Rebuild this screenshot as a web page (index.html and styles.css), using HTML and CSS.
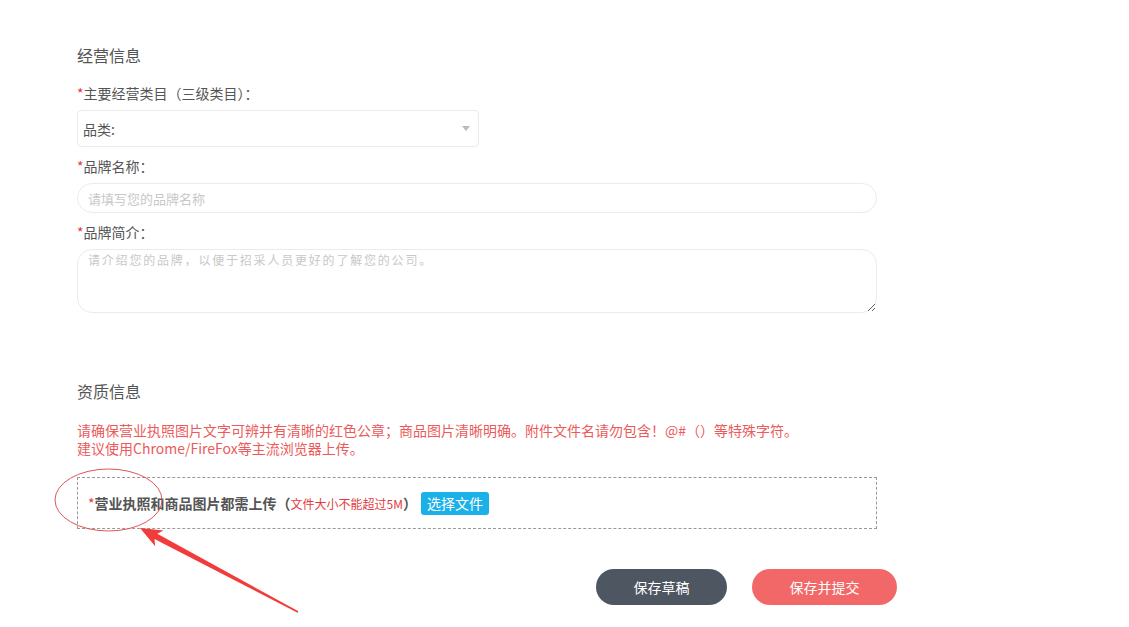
FILE: index.html
```html
<!DOCTYPE html>
<html lang="zh-CN">
<head>
    <meta charset="UTF-8">
    <meta name="viewport" content="width=device-width, initial-scale=1.0">
    <title>经营信息</title>
    <link rel="stylesheet" href="styles.css">
</head>
<body>
<div class="page">
    <h3 class="section-title">经营信息</h3>
    <div class="form-group">
        <label><span class="star">*</span>主要经营类目（三级类目）：</label>
        <div class="select-box">
            <span>品类:</span>
            <i class="caret"></i>
        </div>
    </div>
    <div class="form-group">
        <label for="brandName"><span class="star">*</span>品牌名称：</label>
        <input type="text" id="brandName" class="pill-input" placeholder="请填写您的品牌名称">
    </div>
    <div class="form-group">
        <label for="brandIntro"><span class="star">*</span>品牌简介：</label>
        <textarea id="brandIntro" class="pill-textarea" placeholder="请介绍您的品牌，以便于招采人员更好的了解您的公司。"></textarea>
    </div>

    <h3 class="section-title second">资质信息</h3>
    <p class="notice">
        请确保营业执照图片文字可辨并有清晰的红色公章；商品图片清晰明确。附件文件名请勿包含！@#（）等特殊字符。<br>
        建议使用Chrome/FireFox等主流浏览器上传。
    </p>
    <div class="upload-box">
        <span class="upload-label"><span class="star">*</span>营业执照和商品图片都需上传（<span class="size-tip">文件大小不能超过5M</span>）</span>
        <button class="file-btn">选择文件</button>
    </div>

    <div class="actions">
        <button class="draft-btn">保存草稿</button>
        <button class="submit-btn">保存并提交</button>
    </div>
</div>

<!-- 截图标注 -->
<svg class="markup" width="1129" height="627" viewBox="0 0 1129 627">
    <ellipse cx="108.5" cy="500" rx="53.5" ry="31" fill="none" stroke="#e05656" stroke-width="1"/>
    <polygon points="140,528 163.6,530.4 157.3,533.8 298.4,611.3 297.6,612.7 154.5,539 155.2,546.2" fill="#f23b3b"/>
</svg>
</body>
</html>
```

FILE: styles.css
```css
body {
    margin: 0;
    padding: 0;
    font-family: "Noto Sans CJK SC", "Liberation Sans", sans-serif;
    background-color: #fff;
    color: #555;
}

.page {
    width: 800px;
    padding: 44px 0 0 77px;
}

.section-title {
    margin: 0 0 17px;
    font-size: 16px;
    line-height: 22px;
    font-weight: normal;
    color: #555;
}

.section-title.second {
    margin-top: 67px;
    margin-bottom: 19px;
}

.form-group {
    margin-bottom: 9px;
}

.form-group label {
    display: block;
    font-size: 14px;
    line-height: 20px;
    margin-bottom: 7px;
    color: #555;
}

.star {
    color: #e4393c;
}

.select-box {
    width: 402px;
    height: 37px;
    box-sizing: border-box;
    border: 1px solid #ebebeb;
    border-radius: 4px;
    display: flex;
    align-items: center;
    justify-content: space-between;
    padding: 0 8px 0 5px;
    font-size: 14px;
    color: #555;
}

.caret {
    width: 0;
    height: 0;
    border-left: 4px solid transparent;
    border-right: 4px solid transparent;
    border-top: 5px solid #bbb;
}

.pill-input {
    display: block;
    width: 800px;
    height: 30px;
    box-sizing: border-box;
    border: 1px solid #ebebeb;
    border-radius: 15px;
    padding: 0 10px;
    font-family: inherit;
    font-size: 13px;
    color: #555;
    outline: none;
}

.pill-textarea {
    display: block;
    width: 800px;
    height: 64px;
    box-sizing: border-box;
    border: 1px solid #ebebeb;
    border-radius: 15px;
    padding: 1px 10px;
    font-family: inherit;
    font-size: 12px;
    letter-spacing: 1.8px;
    line-height: 18px;
    color: #555;
    outline: none;
}

.pill-input::placeholder,
.pill-textarea::placeholder {
    color: #c8c8c8;
}

.notice {
    margin: 0 0 20px;
    font-size: 14px;
    line-height: 18px;
    color: #ec5a5a;
}

.upload-box {
    width: 800px;
    height: 52px;
    box-sizing: border-box;
    border: 1px dashed #999;
    display: flex;
    align-items: center;
    padding: 0 10px;
    margin-bottom: 40px;
}

.upload-label {
    font-size: 14px;
    font-weight: bold;
    color: #555;
}

.upload-label .star {
    font-weight: normal;
}

.size-tip {
    font-size: 12px;
    font-weight: normal;
    color: #e4393c;
}

.file-btn {
    margin-left: 4px;
    height: 23px;
    padding: 0 6px;
    border: none;
    border-radius: 3px;
    background-color: #1bb1e8;
    color: #fff;
    font-family: inherit;
    font-size: 14px;
    line-height: 23px;
    cursor: pointer;
}

.actions {
    display: flex;
    gap: 25px;
    padding-left: 519px;
}

.draft-btn, .submit-btn {
    flex-shrink: 0;
    height: 36px;
    border: none;
    border-radius: 18px;
    color: #fff;
    font-family: inherit;
    font-size: 14px;
    cursor: pointer;
}

.draft-btn {
    width: 131px;
    background-color: #4e5661;
}

.submit-btn {
    width: 145px;
    background-color: #f26868;
}

.markup {
    position: absolute;
    left: 0;
    top: 0;
    pointer-events: none;
}
```
